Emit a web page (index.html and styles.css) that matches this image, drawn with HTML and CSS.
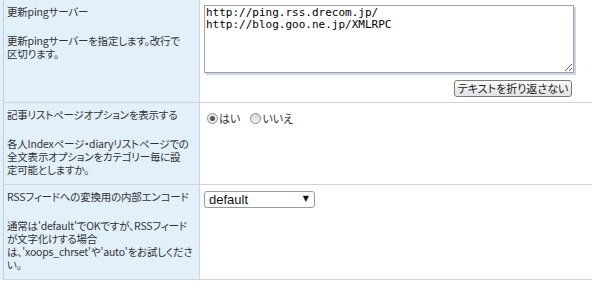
FILE: index.html
```html
<!DOCTYPE html>
<html lang="ja">

<head>
    <meta charset="UTF-8">
    <meta name="viewport" content="width=device-width, initial-scale=1.0">
    <title>一般設定</title>
    <link rel="stylesheet" href="styles.css">
</head>

<body>
    <div class="prefs">
        <div class="row row-ping">
            <div class="head">
                <div class="title">更新pingサーバー</div>
                <div class="desc">更新pingサーバーを指定します。改行で<br>区切ります。</div>
            </div>
            <div class="body">
                <div class="ping-box">
                    <textarea class="ping-list" spellcheck="false">http://ping.rss.drecom.jp/
http://blog.goo.ne.jp/XMLRPC</textarea>
                    <button class="wrap-btn" type="button">テキストを折り返さない</button>
                </div>
            </div>
        </div>

        <div class="row">
            <div class="head">
                <div class="title">記事リストページオプションを表示する</div>
                <div class="desc">各人Indexページ・diaryリストページでの<br>全文表示オプションをカテゴリー毎に設<br>定可能としますか。</div>
            </div>
            <div class="body">
                <div class="radios">
                    <label class="radio"><input type="radio" name="listopt" value="1" checked>はい</label>
                    <label class="radio"><input type="radio" name="listopt" value="0">いいえ</label>
                </div>
            </div>
        </div>

        <div class="row">
            <div class="head">
                <div class="title">RSSフィードへの変換用の内部エンコード</div>
                <div class="desc">通常は'default'でOKですが、RSSフィード<br>が文字化けする場合<br>は、'xoops_chrset'や'auto'をお試しくださ<br>い。</div>
            </div>
            <div class="body">
                <div class="select">
                    <select name="rss_encoding">
                        <option>default</option>
                        <option>xoops_chrset</option>
                        <option>auto</option>
                    </select>
                </div>
            </div>
        </div>
    </div>
</body>

</html>
```

FILE: styles.css
```css
body {
    margin: 0;
    background: #fff;
    color: #333;
    font-family: "Noto Sans CJK JP", "Noto Sans", sans-serif;
    font-size: 11px;
    font-feature-settings: "palt";
}

.prefs {
    padding-left: 3px;
    background: #e2f0fa;
}

.row {
    display: grid;
    grid-template-columns: 196px 1fr;
    border-bottom: 1px solid #cdd5dc;
}

.head {
    border-left: 1px solid #bcd2e4;
    padding: 5px 3px 8px;
    font-size: 10.5px;
    letter-spacing: -0.2px;
    line-height: 13px;
    white-space: nowrap;
    overflow: hidden;
}

.desc {
    margin-top: 16px;
}

.body {
    background: #fff;
    border-left: 1px solid #d4d4d4;
    padding: 5px 4px;
}

/* 更新pingサーバー */
.ping-box {
    width: 370px;
    display: flex;
    flex-direction: column;
    align-items: flex-end;
}

.ping-list {
    box-sizing: border-box;
    width: 370px;
    height: 68px;
    margin: 0;
    padding: 1px;
    border: 1px solid #a0a0a0;
    box-shadow: 2px 2px 0 #c8d6e5;
    font-family: "DejaVu Sans Mono", "Liberation Mono", monospace;
    font-size: 11px;
    line-height: 12px;
    color: #000;
    resize: both;
    outline: none;
}

.wrap-btn {
    box-sizing: border-box;
    width: 118px;
    height: 17px;
    margin: 7px 2px 0 0;
    padding: 0;
    border: 1px solid #7a7a7a;
    border-radius: 3px;
    background: linear-gradient(#fafafa, #e2e2e2);
    color: #222;
    font-family: inherit;
    font-size: 11px;
    line-height: 15px;
    font-feature-settings: "palt";
}

/* ラジオボタン */
.radios {
    display: flex;
    align-items: center;
    height: 20px;
}

.radio {
    display: flex;
    align-items: center;
    margin-right: 7px;
    font-size: 11px;
}

.radio input {
    appearance: none;
    box-sizing: border-box;
    width: 11px;
    height: 11px;
    margin: 0 1px 0 3px;
    border: 1px solid #8e8e8e;
    border-radius: 50%;
    background: linear-gradient(#d6d6d6, #f4f4f4);
}

.radio input:checked {
    background: radial-gradient(circle, #555 0, #555 2px, #e6e6e6 3px, #f0f0f0 100%);
}

/* セレクト */
.select {
    position: relative;
    display: inline-block;
    margin-top: 1px;
}

.select select {
    appearance: none;
    box-sizing: border-box;
    width: 111px;
    height: 17px;
    padding: 0 0 0 4px;
    border: 1px solid #9a9a9a;
    border-radius: 3px;
    background: #fff;
    color: #111;
    font-family: "Liberation Sans", Arial, sans-serif;
    font-size: 13px;
    line-height: 15px;
    outline: none;
}

.select::after {
    content: "\25BC";
    position: absolute;
    right: 6px;
    top: 3px;
    font-family: "DejaVu Sans", sans-serif;
    font-size: 8px;
    line-height: 10px;
    color: #111;
    pointer-events: none;
}
```
